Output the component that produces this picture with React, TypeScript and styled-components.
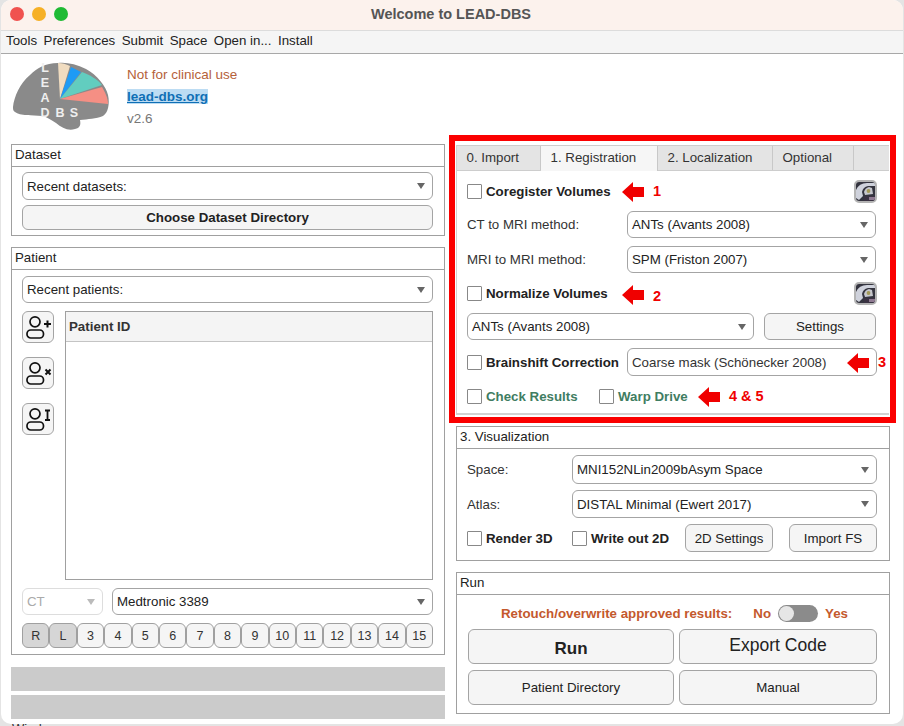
import React from "react";
import styled, { createGlobalStyle } from "styled-components";

const FS = 13.3;

const Global = createGlobalStyle`
  html, body { margin: 0; padding: 0; background: #fff; }
  body { font-family: "Liberation Sans", Arial, sans-serif; color: #222; overflow: hidden; }
  #root { width: 904px; height: 726px; }
`;

const Page = styled.div`
  width: 904px; height: 726px; overflow: hidden; background: #e4e4e4; position: relative;
`;
const BehindText = styled.div`
  position: absolute; left: 12px; top: 721px; font-size: 13px; line-height: 15px; color: #333;
`;
const Win = styled.div`
  width: 902px; height: 724px; margin-left: 1px; background: #fff; border-radius: 10px; overflow: hidden;
  display: flex; flex-direction: column; position: relative;
`;
const TitleBar = styled.div`
  height: 30px; flex: none; background: #fcf2ed; border-bottom: 1px solid #dcdcdc; display: flex; align-items: center; justify-content: center; position: relative;
`;
const TitleText = styled.div`
  font-size: 14.5px; font-weight: 700; color: #555; margin-left: -2px; margin-top: -2px;
`;
const Lights = styled.div`
  position: absolute; left: 9px; top: 7px; display: flex; gap: 8px;
`;
const Light = styled.span<{ $c: string }>`
  width: 14px; height: 14px; border-radius: 50%; background: ${(p) => p.$c};
`;
const MenuBar = styled.div`
  height: 19px; flex: none; background: #f5f5f5; border-bottom: 1px solid #a8a8a8; display: flex; align-items: center; padding: 0 0 3px 5px; gap: 6.5px; font-size: ${FS}px; color: #222;
`;
const Body = styled.div`
  flex: 1; display: flex; align-items: flex-start;
`;
const LeftCol = styled.div`
  width: 434px; margin-left: 10px; flex: none; display: flex; flex-direction: column;
`;
const Header = styled.div`
  height: 90px; display: flex; position: relative;
`;
const Logo = styled.svg`
  width: 98px; height: 70px; margin: 8px 0 0 1px; flex: none;
`;
const HeaderText = styled.div`
  margin: 10px 0 0 17px; display: flex; flex-direction: column; font-size: 13.5px; line-height: 22px;
`;
const Warn = styled.div` color: #b5623a; `;
const SiteLink = styled.div`
  color: #0f6fb5; font-weight: 700; text-decoration: underline;
`;
const SiteText = styled.span` background: #bcdcf3; `;
const Version = styled.div` color: #777; `;

const Panel = styled.section<{ $h: number; $mt?: number }>`
  height: ${(p) => p.$h}px; margin-top: ${(p) => p.$mt ?? 0}px; border: 1px solid #a0a0a0; box-sizing: border-box; display: flex; flex-direction: column; background: #fff;
`;
const PanelTitle = styled.div`
  height: 21px; flex: none; border-bottom: 1px solid #a0a0a0; font-size: ${FS}px; line-height: 20px; padding-left: 3px; color: #222;
`;
const PanelBody = styled.div<{ $pt: number; $gap: number; $pr?: number; $pl?: number }>`
  flex: 1; display: flex; flex-direction: column; padding: ${(p) => p.$pt}px ${(p) => p.$pr ?? 11}px 0 ${(p) => p.$pl ?? 10}px; gap: ${(p) => p.$gap}px; min-height: 0;
`;
const SelectBox = styled.div<{ $h?: number; $w?: number; $off?: boolean }>`
  height: ${(p) => p.$h ?? 28}px; box-sizing: border-box; flex: ${(p) => (p.$w ? `0 0 ${p.$w}px` : "1 1 0")}; min-width: 0;
  border: 1px solid ${(p) => (p.$off ? "#ddd" : "#a4a4a4")}; border-radius: 6px; background: #fff; display: flex; align-items: center; justify-content: space-between;
  padding: 0 6px 0 4px; font-size: ${FS}px; color: ${(p) => (p.$off ? "#aaa" : "#222")};
`;
const WideSelect = styled(SelectBox)`
  flex: none; width: 100%;
`;
const Caret = styled.span<{ $off?: boolean }>`
  width: 0; height: 0; border-left: 4px solid transparent; border-right: 4px solid transparent; border-top: 6px solid ${(p) => (p.$off ? "#bbb" : "#666")}; flex: none; margin-right: 1px;
`;
const Btn = styled.div<{ $h?: number; $w?: number; $fs?: number; $bold?: boolean }>`
  height: ${(p) => p.$h ?? 28}px; box-sizing: border-box; flex: ${(p) => (p.$w ? `0 0 ${p.$w}px` : "1 1 0")};
  border: 1px solid #a4a4a4; border-radius: 6px; background: #f5f5f5; display: flex; align-items: center; justify-content: center;
  font-size: ${(p) => p.$fs ?? FS}px; font-weight: ${(p) => (p.$bold ? 700 : 400)}; color: #222;
`;
const WideBtn = styled(Btn)`
  flex: none; width: 100%;
`;
const RunBtn = styled(Btn)`
  padding-top: 4px;
`;
const ExportBtn = styled(Btn)`
  padding-bottom: 2px;
`;
const PatientMain = styled.div`
  display: flex; gap: 11px; height: 269px; flex: none;
`;
const IconCol = styled.div`
  width: 32px; flex: none; display: flex; flex-direction: column; gap: 14px;
`;
const IconBtn = styled.div`
  width: 32px; height: 32px; box-sizing: border-box; border: 1px solid #a4a4a4; border-radius: 6px; background: #f5f5f5; display: flex; align-items: center; justify-content: center;
`;
const Table = styled.div`
  flex: 1; border: 1px solid #a0a0a0; box-sizing: border-box;
`;
const TableHead = styled.div`
  height: 29px; background: #f4f4f4; border-bottom: 1px solid #c4c4c4; font-size: ${FS}px; font-weight: 700; line-height: 29px; padding-left: 3px; color: #333;
`;
const Row = styled.div<{ $h: number; $gap?: number }>`
  height: ${(p) => p.$h}px; flex: none; display: flex; align-items: center; gap: ${(p) => p.$gap ?? 0}px;
`;
const Contacts = styled.div`
  display: grid; grid-template-columns: repeat(15, 1fr); height: 25px; flex: none;
`;
const Contact = styled.div<{ $on?: boolean }>`
  border: 1px solid #a0a0a0; border-radius: 6px; box-sizing: border-box; background: ${(p) => (p.$on ? "#d6d6d6" : "#f5f5f5")}; font-size: 12.5px; color: #333; display: flex; align-items: center; justify-content: center;
`;
const ProgressBar = styled.div<{ $h: number; $mt: number }>`
  height: ${(p) => p.$h}px; margin-top: ${(p) => p.$mt}px; background: #cbcbcb;
`;
const RightCol = styled.div`
  width: 447px; margin-left: 4px; flex: none; display: flex; flex-direction: column;
`;
const RedBox = styled.div`
  margin-top: 81px; height: 288px; box-sizing: border-box; border: 6px solid #fb0000; padding: 4px 1px 2px; background: #fff; position: relative;
`;
const TabPanel = styled.div`
  height: 100%; box-sizing: border-box; border: 1px solid #d2d2d2; border-width: 0 0 2px 1px; display: flex; flex-direction: column;
`;
const TabBar = styled.div`
  height: 26px; flex: none; display: flex; background: #e4e4e4; border-bottom: 1px solid #cdcdcd; border-top: 1px solid #cdcdcd; box-sizing: border-box;
`;
const Tab = styled.div<{ $w: number; $on?: boolean }>`
  width: ${(p) => p.$w}px; flex: none; box-sizing: border-box; background: ${(p) => (p.$on ? "#f6f6f6" : "#e4e4e4")}; border-right: 1px solid #c8c8c8; font-size: ${FS}px; padding-left: 9.5px; line-height: 24px; color: #333;
  ${(p) => (p.$on ? "margin-bottom:-1px;height:25px;" : "")}
`;
const TabBody = styled.div`
  display: flex; flex-direction: column; padding: 8px 13px 0 10px; gap: 8px;
`;
const Check = styled.span`
  width: 15px; height: 15px; box-sizing: border-box; border: 1px solid #888; border-radius: 1px; background: #fff; flex: none; margin-right: 4px;
`;
const Bold = styled.span<{ $w?: number; $c?: string }>`
  font-size: ${FS}px; font-weight: 700; color: ${(p) => p.$c ?? "#222"}; ${(p) => (p.$w ? `width:${p.$w}px;flex:none;` : "")} white-space: nowrap;
`;
const Label = styled.span<{ $w: number }>`
  width: ${(p) => p.$w}px; flex: none; font-size: ${FS}px; color: #333;
`;
const Spacer = styled.span` flex: 1; `;
const ThumbBtn = styled.div`
  width: 23px; height: 23px; box-sizing: border-box; border: 2px solid #b4b4b4; border-radius: 5px; background: #eee; overflow: hidden; display: flex; margin-right: -1px;
`;
const PlainField = styled.div`
  width: 250px; height: 28px; flex: none; box-sizing: border-box; border: 1px solid #a4a4a4; border-radius: 6px; font-size: ${FS}px; display: flex; align-items: center; padding-left: 4px; color: #333;
`;
const Arrow = styled.svg<{ $x: number; $y: number }>`
  position: absolute; left: ${(p) => p.$x}px; top: ${(p) => p.$y}px; width: 22px; height: 20px;
`;
const Note = styled.span<{ $x: number; $y: number }>`
  position: absolute; left: ${(p) => p.$x}px; top: ${(p) => p.$y}px; font-size: 14.5px; font-weight: 700; color: #f00000; line-height: 16px; white-space: nowrap;
`;
const SidePanel = styled(Panel)`
  margin-left: 7px; width: 434px;
`;
const ToggleRow = styled.div`
  height: 18px; flex: none; display: flex; align-items: center; font-size: ${FS}px; font-weight: 700; color: #c4592d; padding-left: 33px; white-space: nowrap;
`;
const Track = styled.span`
  width: 40px; height: 17px; border-radius: 9px; background: #8b8b8b; position: relative; margin: 0 7px; flex: none;
`;
const Knob = styled.span`
  position: absolute; left: 1px; top: 1px; width: 15px; height: 15px; border-radius: 50%; background: #e6e6e6;
`;
const GapText = styled.span` margin-left: 21px; `;
const BtnGrid = styled.div`
  display: grid; grid-template-columns: 206px 198px; column-gap: 5px; row-gap: 6px; grid-template-rows: 35px 35px; margin-top: 7px;
`;

const arrowPath = "M0 10 L11 0 L11 5 L22 5 L22 15 L11 15 L11 20 Z";
const RedArrow = ({ x, y }: { x: number; y: number }) => (
  <Arrow $x={x} $y={y} viewBox="0 0 22 20"><path d={arrowPath} fill="#f00000" /></Arrow>
);

const Person = ({ kind }: { kind: "add" | "del" | "ren" }) => (
  <svg width="28" height="28" viewBox="0 0 28 28" fill="none" stroke="#111" strokeWidth="1.7">
    <circle cx="11" cy="8.8" r="5" />
    <rect x="3" y="17" width="16.5" height="8" rx="3.8" />
    {kind === "add" && <path d="M20 11h7M23.5 7.5v7" strokeWidth="2" />}
    {kind === "del" && <path d="M21.5 10.5l5 5M26.5 10.5l-5 5" strokeWidth="2" />}
    {kind === "ren" && <path d="M21 5.5h5M21 15h5M23.5 5.5v9.5" strokeWidth="1.8" />}
  </svg>
);

const Thumb = () => (
  <svg width="19" height="19" viewBox="0 0 19 19">
    <rect width="19" height="19" fill="#34343f" />
    <path d="M0 8Q3 1 11 1L19 1L19 4L12 4Q7 5 6 10L7 14L3 18L0 16Z" fill="#cfd2dc" />
    <path d="M8 10q1-4 5-5l3 1 1 6-8 1Z" fill="#c6c7cd" />
    <circle cx="12.5" cy="9" r="1.9" fill="#a39a58" />
    <path d="M8 14h11v5H8Z" fill="#3a3242" />
    <path d="M13 15h6v3h-6Z" fill="#8f7a92" />
  </svg>
);

const BrainLogo = () => (
  <Logo viewBox="12 62 98 70">
    <path d="M13 107C14 97 20 83 30 75C37 68 45 63 58 63C66 62 76 64 86 69C97 75 106 86 108 95C110 104 108 113 103 116C96 119 88 119 80 120C81 125 80 128 75 129C68 131 62 128 56 123C51 120 47 117 42 116C32 115 20 116 15 112C13 111 13 109 13 107Z" fill="#8a8a8a" />
    <path d="M60 99L58 63C62 63 66 64 70 66Z" fill="#f0dcc0" />
    <path d="M60 99L71 67L81 72Z" fill="#1e9bf5" />
    <path d="M60 99L82 72C90 75 97 79 102 85Z" fill="#62cdbf" />
    <path d="M60 99L102 87C105 92 108 98 108 104Z" fill="#f58f84" />
    <g fill="#efefef" fontFamily="Liberation Sans" fontSize="12.5" fontWeight="700" textAnchor="middle">
      <text x="45" y="72">L</text><text x="45" y="87">E</text><text x="45" y="102">A</text>
      <text x="45" y="117">D</text><text x="60" y="117">B</text><text x="74" y="117">S</text>
    </g>
  </Logo>
);

export default function App() {
  return (
    <Page>
      <Global />
      <BehindText>Window</BehindText>
      <Win>
        <TitleBar>
          <Lights><Light $c="#f0524f" /><Light $c="#f6b026" /><Light $c="#1fba34" /></Lights>
          <TitleText>Welcome to LEAD-DBS</TitleText>
        </TitleBar>
        <MenuBar>
          <span>Tools</span><span>Preferences</span><span>Submit</span><span>Space</span><span>Open in...</span><span>Install</span>
        </MenuBar>
        <Body>
          <LeftCol>
            <Header>
              <BrainLogo />
              <HeaderText>
                <Warn>Not for clinical use</Warn>
                <SiteLink><SiteText>lead-dbs.org</SiteText></SiteLink>
                <Version>v2.6</Version>
              </HeaderText>
            </Header>
            <Panel $h={92}>
              <PanelTitle>Dataset</PanelTitle>
              <PanelBody $pt={5} $gap={5}>
                <WideSelect>Recent datasets:<Caret /></WideSelect>
                <WideBtn $h={25} $bold>Choose Dataset Directory</WideBtn>
              </PanelBody>
            </Panel>
            <Panel $h={408} $mt={11}>
              <PanelTitle>Patient</PanelTitle>
              <PanelBody $pt={6} $gap={8}>
                <WideSelect $h={27}>Recent patients:<Caret /></WideSelect>
                <PatientMain>
                  <IconCol>
                    <IconBtn><Person kind="add" /></IconBtn>
                    <IconBtn><Person kind="del" /></IconBtn>
                    <IconBtn><Person kind="ren" /></IconBtn>
                  </IconCol>
                  <Table><TableHead>Patient ID</TableHead></Table>
                </PatientMain>
                <Row $h={27} $gap={9}>
                  <SelectBox $h={27} $w={81} $off>CT<Caret $off /></SelectBox>
                  <SelectBox $h={27}>Medtronic 3389<Caret /></SelectBox>
                </Row>
                <Contacts>
                  {["R","L","3","4","5","6","7","8","9","10","11","12","13","14","15"].map((c, i) => (
                    <Contact key={c} $on={i < 2}>{c}</Contact>
                  ))}
                </Contacts>
              </PanelBody>
            </Panel>
            <ProgressBar $h={24} $mt={12} />
            <ProgressBar $h={24} $mt={4} />
          </LeftCol>
          <RightCol>
            <RedBox>
              <TabPanel>
                <TabBar>
                  <Tab $w={84}>0. Import</Tab>
                  <Tab $w={117} $on>1. Registration</Tab>
                  <Tab $w={115}>2. Localization</Tab>
                  <Tab $w={81}>Optional</Tab>
                </TabBar>
                <TabBody>
                  <Row $h={24}><Check /><Bold>Coregister Volumes</Bold><Spacer /><ThumbBtn><Thumb /></ThumbBtn></Row>
                  <Row $h={27}><Label $w={160}>CT to MRI method:</Label><SelectBox $h={27}>ANTs (Avants 2008)<Caret /></SelectBox></Row>
                  <Row $h={27}><Label $w={160}>MRI to MRI method:</Label><SelectBox $h={27}>SPM (Friston 2007)<Caret /></SelectBox></Row>
                  <Row $h={24}><Check /><Bold>Normalize Volumes</Bold><Spacer /><ThumbBtn><Thumb /></ThumbBtn></Row>
                  <Row $h={27} $gap={10}><SelectBox $h={27} $w={287}>ANTs (Avants 2008)<Caret /></SelectBox><Btn $h={27}>Settings</Btn></Row>
                  <Row $h={28}><Check /><Bold $w={141}>Brainshift Correction</Bold><PlainField>Coarse mask (Schönecker 2008)</PlainField></Row>
                  <Row $h={24}><Check /><Bold $w={113} $c="#3f7d62">Check Results</Bold><Check /><Bold $c="#3f7d62">Warp Drive</Bold></Row>
                </TabBody>
              </TabPanel>
              <RedArrow x={167} y={41} />
              <Note $x={198} $y={42}>1</Note>
              <RedArrow x={167} y={144} />
              <Note $x={198} $y={147}>2</Note>
              <RedArrow x={392} y={212} />
              <Note $x={423} $y={213}>3</Note>
              <RedArrow x={243} y={246} />
              <Note $x={274} $y={247}>4 &amp; 5</Note>
            </RedBox>
            <SidePanel $h={135} $mt={3}>
              <PanelTitle>3. Visualization</PanelTitle>
              <PanelBody $pt={6} $gap={6} $pr={12}>
                <Row $h={29}><Label $w={105}>Space:</Label><SelectBox $h={29}>MNI152NLin2009bAsym Space<Caret /></SelectBox></Row>
                <Row $h={28}><Label $w={105}>Atlas:</Label><SelectBox>DISTAL Minimal (Ewert 2017)<Caret /></SelectBox></Row>
                <Row $h={28}>
                  <Check /><Bold $w={86}>Render 3D</Bold>
                  <Check /><Bold $w={94}>Write out 2D</Bold>
                  <Btn $w={88}>2D Settings</Btn>
                  <Spacer />
                  <Btn $w={88}>Import FS</Btn>
                </Row>
              </PanelBody>
            </SidePanel>
            <SidePanel $h={142} $mt={11}>
              <PanelTitle>Run</PanelTitle>
              <PanelBody $pt={9} $gap={0} $pl={11}>
                <ToggleRow>
                  <span>Retouch/overwrite approved results:</span>
                  <GapText>No</GapText>
                  <Track><Knob /></Track>
                  <span>Yes</span>
                </ToggleRow>
                <BtnGrid>
                  <RunBtn $h={35} $fs={17} $bold>Run</RunBtn>
                  <ExportBtn $h={35} $fs={17.5}>Export Code</ExportBtn>
                  <Btn $h={35}>Patient Directory</Btn>
                  <Btn $h={35}>Manual</Btn>
                </BtnGrid>
              </PanelBody>
            </SidePanel>
          </RightCol>
        </Body>
      </Win>
    </Page>
  );
}
